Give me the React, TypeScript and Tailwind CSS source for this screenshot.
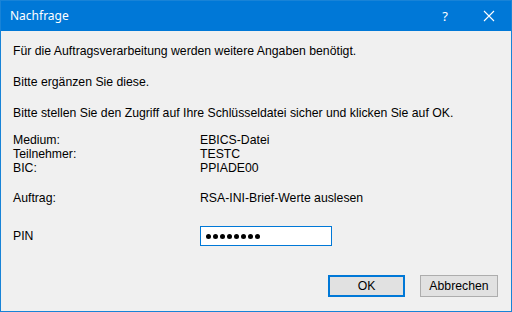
import React from "react";

export default function App() {
  const font = { fontFamily: '"Liberation Sans", Arial, sans-serif' };
  return (
    <div className="w-[512px] h-[312px] bg-[#1883d7] p-[1px] flex flex-col overflow-hidden">
      <div className="h-[30px] bg-[#0078d7] flex items-center text-white shrink-0" style={{ fontFamily: '"Noto Sans", "Open Sans", sans-serif' }}>
        <span className="ml-[9px] text-[12px] leading-none">Nachfrage</span>
        <span className="ml-auto mr-[35px] text-[13px] leading-none">?</span>
        <svg width="12" height="12" viewBox="0 0 12 12" className="mr-[16px]">
          <path d="M1 1 L11 11 M11 1 L1 11" stroke="white" strokeWidth="1.1" />
        </svg>
      </div>
      <div className="flex-1 bg-[#f0f0f0] flex flex-col text-[12.25px] leading-[14px] text-black pl-[12px]" style={font}>
        <p className="mt-[13px]">Für die Auftragsverarbeitung werden weitere Angaben benötigt.</p>
        <p className="mt-[17px]">Bitte ergänzen Sie diese.</p>
        <p className="mt-[17px]">Bitte stellen Sie den Zugriff auf Ihre Schlüsseldatei sicher und klicken Sie auf OK.</p>
        <div className="mt-[13px] grid grid-cols-[187px_1fr]">
          <span>Medium:</span><span>EBICS-Datei</span>
          <span>Teilnehmer:</span><span>TESTC</span>
          <span>BIC:</span><span>PPIADE00</span>
        </div>
        <div className="mt-[16px] grid grid-cols-[187px_1fr]">
          <span>Auftrag:</span><span>RSA-INI-Brief-Werte auslesen</span>
        </div>
        <div className="mt-[21px] grid grid-cols-[187px_1fr] items-center">
          <span>PIN</span>
          <div className="w-[132px] h-[20px] border border-[#0078d7] bg-white flex items-center pl-[5px] gap-[2px]">
            {[0, 1, 2, 3, 4, 5, 6, 7].map((i) => (
              <span key={i} className="w-[5px] h-[5px] rounded-full bg-black" />
            ))}
          </div>
        </div>
        <div className="mt-[29px] flex justify-end gap-[15px] pr-[13px]">
          <button className="w-[77px] h-[22px] border-2 border-[#0078d7] bg-[#e1e1e1] text-[12.25px] leading-none">OK</button>
          <button className="w-[78px] h-[22px] border border-[#adadad] bg-[#e1e1e1] text-[12.25px] leading-none">Abbrechen</button>
        </div>
      </div>
    </div>
  );
}
